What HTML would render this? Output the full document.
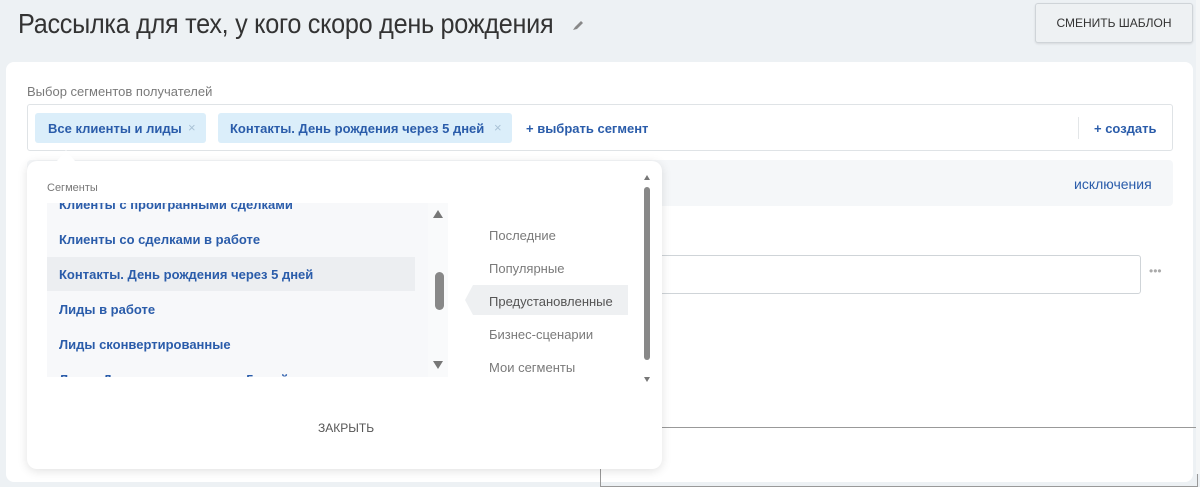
<!DOCTYPE html>
<html><head><meta charset="utf-8"><style>
*{box-sizing:border-box;margin:0;padding:0}
body{width:1200px;height:474px;overflow:hidden;background:#edf1f4;font-family:"Liberation Sans",sans-serif;position:relative}
.a{position:absolute}
.blue{color:#2a5caa;font-weight:bold;font-size:13px}
.it{position:absolute;left:12px;font-size:13px;font-weight:bold;color:#2a5caa;white-space:nowrap}
.m{position:absolute;left:489px;font-size:13px;color:#7a7a7a}
.x{position:absolute;top:7px;color:#a9c2d6;font-size:13px;line-height:16px}
</style></head><body>
<div class="a" style="left:18px;top:8px;font-size:28px;color:#333;font-weight:300;letter-spacing:-0.3px;transform:scaleX(0.9);transform-origin:0 0;white-space:nowrap">Рассылка для тех, у кого скоро день рождения</div>
<svg class="a" style="left:572px;top:19px" width="12" height="12"><path d="M1 11 L3 8 L9 2 L11 4 L5 10 Z" fill="#888"/></svg>
<div class="a" style="left:1035px;top:3px;width:158px;height:40px;border:1px solid #cfd4d8;border-radius:3px;background:#eef1f3;box-shadow:0 1px 2px rgba(0,0,0,.1);font-size:12px;color:#333;text-align:center;line-height:38px">СМЕНИТЬ ШАБЛОН</div>
<div class="a" style="left:6px;top:62px;width:1187px;height:420px;background:#fff;border-radius:8px"></div>
<div class="a" style="left:27px;top:84px;font-size:13px;color:#7a7a7a">Выбор сегментов получателей</div>
<div class="a" style="left:27px;top:104px;width:1146px;height:47px;border:1px solid #dfe3e6;border-radius:3px"></div>
<div class="a" style="left:35px;top:113px;width:171px;height:30px;background:#dbeefa;border-radius:3px"><span class="blue" style="position:absolute;left:13px;top:8px">Все клиенты и лиды</span><span class="x" style="left:153px">×</span></div>
<div class="a" style="left:218px;top:113px;width:294px;height:30px;background:#dbeefa;border-radius:3px"><span class="blue" style="position:absolute;left:12px;top:8px">Контакты. День рождения через 5 дней</span><span class="x" style="left:276px">×</span></div>
<div class="a blue" style="left:526px;top:121px">+ выбрать сегмент</div>
<div class="a" style="left:1078px;top:117px;width:1px;height:22px;background:#e3e6e8"></div>
<div class="a blue" style="left:1094px;top:121px">+ создать</div>
<div class="a" style="left:27px;top:160px;width:1146px;height:46px;background:#f5f7f9;border-radius:4px"></div>
<div class="a" style="left:1074px;top:176px;font-size:14px;color:#2a5caa">исключения</div>
<div class="a" style="left:600px;top:255px;width:541px;height:39px;border:1px solid #cfd4d8;border-radius:3px"></div>
<div class="a" style="left:1149px;top:264px;font-size:12px;color:#aaa">•••</div>
<div class="a" style="left:600px;top:427px;width:598px;height:60px;border:1px solid #999"></div>
<div class="a" style="left:1196px;top:0;width:4px;height:474px;background:#f4f6f7"></div>

<div class="a" style="left:27px;top:161px;width:635px;height:308px;background:#fff;border-radius:10px;box-shadow:0 2px 10px rgba(0,0,0,.12)"></div>
<div class="a" style="left:57px;top:150px;width:0;height:0;border-left:9px solid transparent;border-right:9px solid transparent;border-bottom:11px solid #fff"></div>
<div class="a" style="left:47px;top:182px;font-size:11px;color:#777">Сегменты</div>
<div class="a" style="left:47px;top:203px;width:401px;height:174px;background:#f7f8fa;overflow:hidden">
<div style="position:absolute;left:0;top:54px;width:368px;height:34px;background:#eceef1"></div>
<div class="it" style="top:-6px">Клиенты с проигранными сделками</div>
<div class="it" style="top:29px">Клиенты со сделками в работе</div>
<div class="it" style="top:64px">Контакты. День рождения через 5 дней</div>
<div class="it" style="top:99px">Лиды в работе</div>
<div class="it" style="top:134px">Лиды сконвертированные</div>
<div class="it" style="top:169px">Лиды. День рождения через 5 дней</div>
<div style="position:absolute;left:381px;top:0;width:20px;height:174px;background:#f9fafb"></div>
<div style="position:absolute;left:386px;top:7px;border-left:5px solid transparent;border-right:5px solid transparent;border-bottom:8px solid #777"></div>
<div style="position:absolute;left:388px;top:69px;width:9px;height:38px;background:#888;border-radius:5px"></div>
<div style="position:absolute;left:386px;top:158px;border-left:5px solid transparent;border-right:5px solid transparent;border-top:8px solid #777"></div>
</div>
<div class="a" style="left:465px;top:285px;width:163px;height:30px;background:#eef0f2;clip-path:polygon(0 50%,8px 0,100% 0,100% 100%,8px 100%)"></div>
<div class="m" style="top:228px">Последние</div>
<div class="m" style="top:261px">Популярные</div>
<div class="m" style="top:294px;color:#555">Предустановленные</div>
<div class="m" style="top:327px">Бизнес-сценарии</div>
<div class="m" style="top:360px">Мои сегменты</div>
<div class="a" style="left:644px;top:175px;border-left:3px solid transparent;border-right:3px solid transparent;border-bottom:5px solid #777"></div>
<div class="a" style="left:644px;top:187px;width:6px;height:173px;background:#888;border-radius:3px"></div>
<div class="a" style="left:644px;top:377px;border-left:3px solid transparent;border-right:3px solid transparent;border-top:5px solid #777"></div>
<div class="a" style="left:318px;top:421px;font-size:12px;color:#555">ЗАКРЫТЬ</div>
</body></html>
